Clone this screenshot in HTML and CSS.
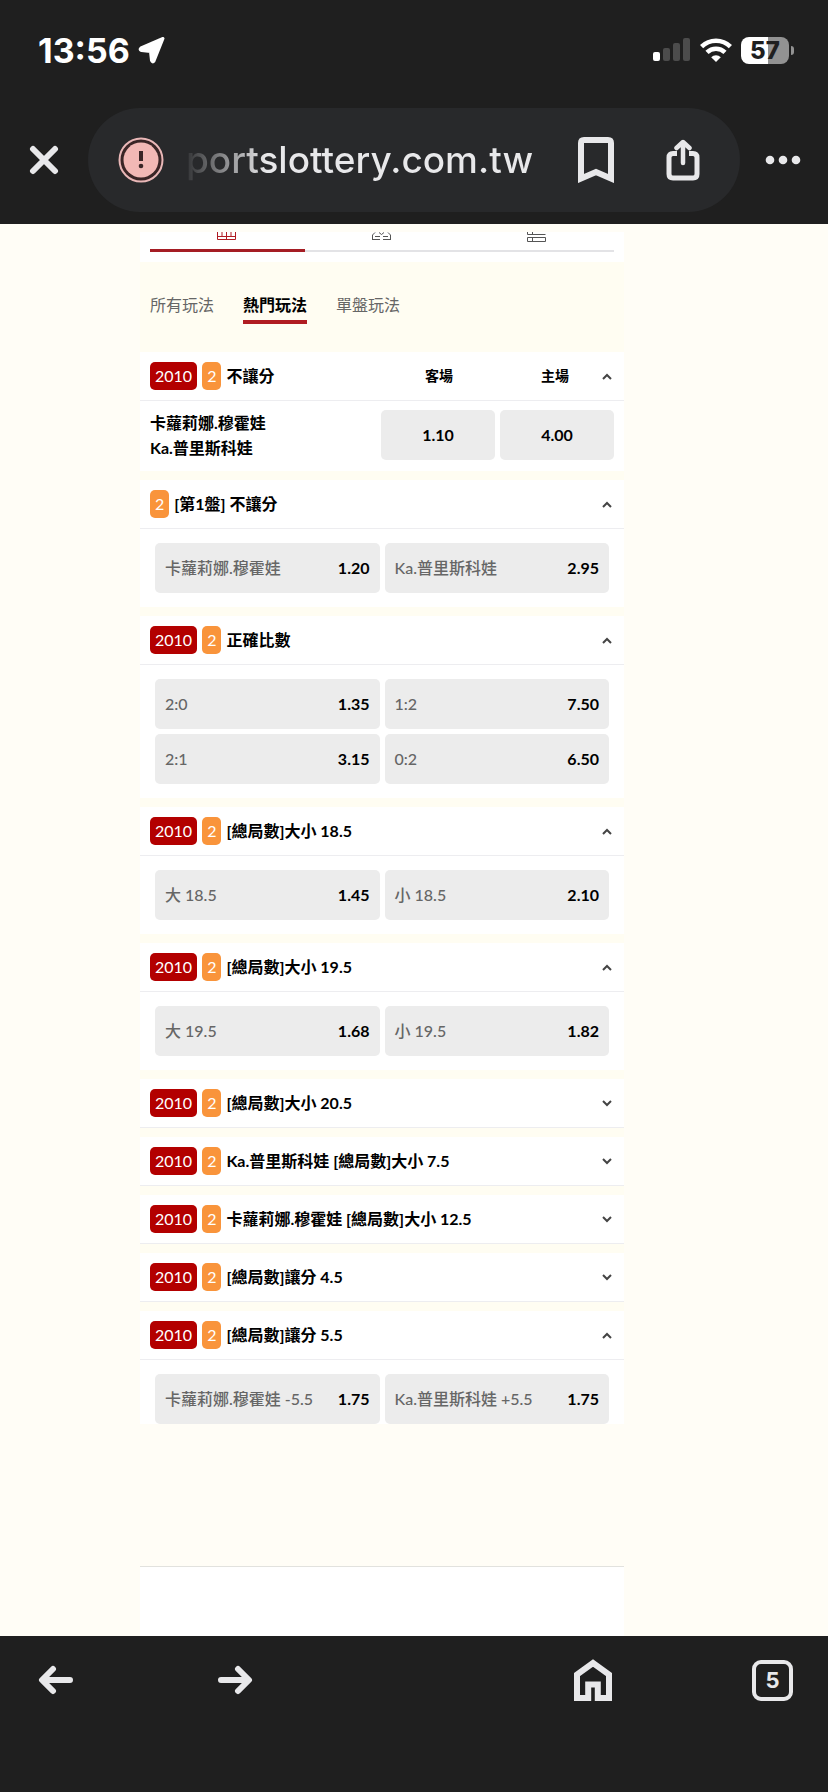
FILE: index.html
```
<!DOCTYPE html>
<html lang="zh-Hant">
<head>
  <meta charset="UTF-8" />
  <meta name="viewport" content="width=device-width, initial-scale=1.0"/>
  <title>熱門玩法</title>
  <link rel="stylesheet" href="styles.css">
</head>
<body>
  <header class="browser-top">
    <div class="status-bar">
      <span class="time">13:56</span>
      <svg class="location" width="28" height="28" viewBox="0 0 28 28"><path d="M25 2.5 L16 25 Q14.5 27 13.5 24.5 L12.5 15.5 L3.5 14.5 Q1 13.5 3 12 Z" fill="#fff" stroke="#fff" stroke-width="3" stroke-linejoin="round"/></svg>
      <div class="status-icons">
        <svg width="38" height="24" viewBox="0 0 38 24">
          <rect x="0" y="14" width="7" height="9" rx="2" fill="#fff"/>
          <rect x="10" y="10" width="7" height="13" rx="2" fill="#4c4c4c"/>
          <rect x="20" y="5" width="7" height="18" rx="2" fill="#4c4c4c"/>
          <rect x="30" y="0" width="7" height="23" rx="2" fill="#4c4c4c"/>
        </svg>
        <svg width="32" height="24" viewBox="0 0 32 24" fill="none" stroke="#fff" stroke-width="4.5">
          <path d="M1.6 8.6 A20.5 20.5 0 0 1 30.4 8.6"/>
          <path d="M7 14.3 A13 13 0 0 1 25 14.3"/>
          <path d="M16 24 L11.2 19.2 A6.8 6.8 0 0 1 20.8 19.2 Z" fill="#fff" stroke="none"/>
        </svg>
        <div class="battery"><span class="battery-body">57</span><span class="battery-cap"></span></div>
      </div>
    </div>
    <div class="address-row">
      <button class="icon-btn" aria-label="關閉">
        <svg width="30" height="30" viewBox="0 0 30 30"><path d="M4 4 L26 26 M26 4 L4 26" stroke="#e8e8ea" stroke-width="6" stroke-linecap="round"/></svg>
      </button>
      <div class="address-bar">
        <svg class="warning" width="46" height="46" viewBox="0 0 46 46">
          <circle cx="23" cy="23" r="21.5" fill="#3a2526" stroke="#e9b7b7" stroke-width="2"/>
          <circle cx="23" cy="23" r="17.5" fill="#f2b8b5"/>
          <path d="M23 14 V24" stroke="#3a2526" stroke-width="4"/>
          <circle cx="23" cy="29" r="2.3" fill="#3a2526"/>
        </svg>
        <span class="url">portslottery.com.tw</span>
        <button class="icon-btn" aria-label="書籤">
          <svg width="36" height="46" viewBox="0 0 36 46"><path d="M3 41.5 V6 Q3 3 6 3 H30 Q33 3 33 6 V41.5 L18 35 Z" fill="none" stroke="#e8e8ea" stroke-width="6"/></svg>
        </button>
        <button class="icon-btn share" aria-label="分享">
          <svg width="34" height="42" viewBox="0 0 34 42" fill="none" stroke="#e8e8ea" stroke-width="5">
            <path d="M11 14.5 H7 Q3 14.5 3 18.5 V35 Q3 39 7 39 H27 Q31 39 31 35 V18.5 Q31 14.5 27 14.5 H23"/>
            <path d="M17 24 V4 M10.5 9 L17 3 L23.5 9" stroke-width="4.5" stroke-linecap="round" stroke-linejoin="round"/>
          </svg>
        </button>
      </div>
      <button class="icon-btn" aria-label="更多">
        <svg width="36" height="10" viewBox="0 0 36 10" fill="#e8e8ea"><circle cx="5" cy="5" r="4.3"/><circle cx="18" cy="5" r="4.3"/><circle cx="31" cy="5" r="4.3"/></svg>
      </button>
    </div>
  </header>

  <main class="page">
    <div class="markets">
      <nav class="view-tabs">
        <a href="#" class="view-tab active" aria-label="盤口">
          <svg width="20" height="9" viewBox="0 0 20 9" fill="none" stroke="#b01c22"><path d="M.5 0 V7.5 H18.5 V0 M.5 4.5 H18.5 M5 0 V4.5 M9.5 0 V7.5 M14 0 V4.5"/></svg>
        </a>
        <a href="#" class="view-tab" aria-label="對戰">
          <svg width="20" height="9" viewBox="0 0 20 9" fill="none" stroke="#555"><path d="M.5 8 V3 L3 .5 M7 .5 L9.5 2.5 L12 .5 M16 .5 L18.5 3 V8 M3 4.5 H8 M11 4.5 H16 M1 7.5 H8 M11 7.5 H18"/></svg>
        </a>
        <a href="#" class="view-tab" aria-label="數據">
          <svg width="20" height="10" viewBox="0 0 20 10" fill="none" stroke="#555"><path d="M.5 0 V2.5 H18.5 M5.5 0 V2.5 M.5 5.5 H18.5 V9.5 H.5 Z M5.5 5.5 V9.5"/></svg>
        </a>
      </nav>

      <nav class="filters">
        <a href="#">所有玩法</a>
        <a href="#" class="active">熱門玩法</a>
        <a href="#">單盤玩法</a>
      </nav>

      <section class="market">
        <h2 class="market-head">
          <span class="tag red">2010</span><span class="tag orange">2</span>
          <span class="title">不讓分</span>
          <span class="side">客場</span><span class="side">主場</span>
          <button class="toggle" aria-label="收合"><svg width="10" height="7" viewBox="0 0 10 7"><path d="M1 6 L5 2 L9 6"/></svg></button>
        </h2>
        <div class="match">
          <div class="players">卡蘿莉娜.穆霍娃<br>Ka.普里斯科娃</div>
          <button class="odd single"><b>1.10</b></button>
          <button class="odd single"><b>4.00</b></button>
        </div>
      </section>

      <section class="market">
        <h2 class="market-head">
          <span class="tag orange">2</span>
          <span class="title">[第1盤] 不讓分</span>
          <button class="toggle" aria-label="收合"><svg width="10" height="7" viewBox="0 0 10 7"><path d="M1 6 L5 2 L9 6"/></svg></button>
        </h2>
        <div class="odds">
          <button class="odd">卡蘿莉娜.穆霍娃 <b>1.20</b></button>
          <button class="odd">Ka.普里斯科娃 <b>2.95</b></button>
        </div>
      </section>

      <section class="market">
        <h2 class="market-head">
          <span class="tag red">2010</span><span class="tag orange">2</span>
          <span class="title">正確比數</span>
          <button class="toggle" aria-label="收合"><svg width="10" height="7" viewBox="0 0 10 7"><path d="M1 6 L5 2 L9 6"/></svg></button>
        </h2>
        <div class="odds">
          <button class="odd">2:0 <b>1.35</b></button>
          <button class="odd">1:2 <b>7.50</b></button>
          <button class="odd">2:1 <b>3.15</b></button>
          <button class="odd">0:2 <b>6.50</b></button>
        </div>
      </section>

      <section class="market">
        <h2 class="market-head">
          <span class="tag red">2010</span><span class="tag orange">2</span>
          <span class="title">[總局數]大小 18.5</span>
          <button class="toggle" aria-label="收合"><svg width="10" height="7" viewBox="0 0 10 7"><path d="M1 6 L5 2 L9 6"/></svg></button>
        </h2>
        <div class="odds">
          <button class="odd">大 18.5 <b>1.45</b></button>
          <button class="odd">小 18.5 <b>2.10</b></button>
        </div>
      </section>

      <section class="market">
        <h2 class="market-head">
          <span class="tag red">2010</span><span class="tag orange">2</span>
          <span class="title">[總局數]大小 19.5</span>
          <button class="toggle" aria-label="收合"><svg width="10" height="7" viewBox="0 0 10 7"><path d="M1 6 L5 2 L9 6"/></svg></button>
        </h2>
        <div class="odds">
          <button class="odd">大 19.5 <b>1.68</b></button>
          <button class="odd">小 19.5 <b>1.82</b></button>
        </div>
      </section>

      <section class="market">
        <h2 class="market-head">
          <span class="tag red">2010</span><span class="tag orange">2</span>
          <span class="title">[總局數]大小 20.5</span>
          <button class="toggle" aria-label="展開"><svg width="10" height="7" viewBox="0 0 10 7"><path d="M1 1 L5 5 L9 1"/></svg></button>
        </h2>
      </section>

      <section class="market">
        <h2 class="market-head">
          <span class="tag red">2010</span><span class="tag orange">2</span>
          <span class="title">Ka.普里斯科娃 [總局數]大小 7.5</span>
          <button class="toggle" aria-label="展開"><svg width="10" height="7" viewBox="0 0 10 7"><path d="M1 1 L5 5 L9 1"/></svg></button>
        </h2>
      </section>

      <section class="market">
        <h2 class="market-head">
          <span class="tag red">2010</span><span class="tag orange">2</span>
          <span class="title">卡蘿莉娜.穆霍娃 [總局數]大小 12.5</span>
          <button class="toggle" aria-label="展開"><svg width="10" height="7" viewBox="0 0 10 7"><path d="M1 1 L5 5 L9 1"/></svg></button>
        </h2>
      </section>

      <section class="market">
        <h2 class="market-head">
          <span class="tag red">2010</span><span class="tag orange">2</span>
          <span class="title">[總局數]讓分 4.5</span>
          <button class="toggle" aria-label="展開"><svg width="10" height="7" viewBox="0 0 10 7"><path d="M1 1 L5 5 L9 1"/></svg></button>
        </h2>
      </section>

      <section class="market last">
        <h2 class="market-head">
          <span class="tag red">2010</span><span class="tag orange">2</span>
          <span class="title">[總局數]讓分 5.5</span>
          <button class="toggle" aria-label="收合"><svg width="10" height="7" viewBox="0 0 10 7"><path d="M1 6 L5 2 L9 6"/></svg></button>
        </h2>
        <div class="odds">
          <button class="odd">卡蘿莉娜.穆霍娃 -5.5 <b>1.75</b></button>
          <button class="odd">Ka.普里斯科娃 +5.5 <b>1.75</b></button>
        </div>
      </section>
    </div>

    <div class="bet-slip"></div>
  </main>

  <footer class="browser-bottom">
    <button class="icon-btn" aria-label="上一頁">
      <svg width="36" height="30" viewBox="0 0 36 30"><path d="M32 15 H5 M15 4 L4 15 L15 26"/></svg>
    </button>
    <button class="icon-btn forward" aria-label="下一頁">
      <svg width="36" height="30" viewBox="0 0 36 30"><path d="M4 15 H31 M21 4 L32 15 L21 26"/></svg>
    </button>
    <button class="icon-btn home" aria-label="首頁">
      <svg width="40" height="42" viewBox="0 0 40 42"><path d="M4 39 V15.5 L20 4 L36 15.5 V39 H24.8 V25.5 H15.2 V39 Z"/></svg>
    </button>
    <button class="tab-count" aria-label="分頁">5</button>
  </footer>
</body>
</html>
```
FILE: styles.css
```
* {
  box-sizing: border-box;
}

body {
  margin: 0;
  min-height: 100vh;
  display: flex;
  flex-direction: column;
  font-family: Lato, 'Noto Sans CJK TC', sans-serif;
  font-size: 16px;
  background: #fffdf6;
  color: #000;
}

button {
  border: none;
  padding: 0;
  background: none;
  font-family: inherit;
  cursor: pointer;
}

a {
  color: inherit;
  text-decoration: none;
}

svg {
  display: block;
}

/* browser chrome */
.browser-top {
  background: #1f1f1f;
  padding-bottom: 12px;
}

.status-bar {
  display: flex;
  align-items: center;
  height: 100px;
  padding: 0 34px 0 38px;
  color: #fff;
  font-family: Inter, sans-serif;
}

.time {
  font-size: 34px;
  font-weight: 700;
}

.location {
  margin-left: 8px;
}

.status-icons {
  display: flex;
  align-items: center;
  gap: 9px;
  margin-left: auto;
}

.battery {
  display: flex;
  align-items: center;
  gap: 2px;
}

.battery-body {
  width: 48px;
  height: 27px;
  border-radius: 8px;
  background: linear-gradient(90deg, #fff 56%, #929292 56%);
  color: #1f1f1f;
  font-size: 24px;
  font-weight: 800;
  line-height: 27px;
  text-align: center;
}

.battery-cap {
  width: 3px;
  height: 9px;
  border-radius: 0 3px 3px 0;
  background: #929292;
}

.address-row {
  display: flex;
  align-items: center;
  padding: 8px 27px 0 29px;
}

.address-bar {
  flex: 1;
  display: flex;
  align-items: center;
  height: 104px;
  margin: 0 25px 0 29px;
  padding: 0 40px 0 30px;
  border-radius: 52px;
  background: #28292b;
}

.icon-btn {
  display: block;
}

.url {
  flex: 1;
  margin-left: 22px;
  padding-bottom: 2px;
  font-family: Inter, sans-serif;
  font-size: 37px;
  font-weight: 500;
  background: linear-gradient(90deg, #333436, #e8e8ea 80px);
  -webkit-background-clip: text;
  background-clip: text;
  color: transparent;
}

.share {
  margin-left: 52px;
}

.browser-bottom {
  display: flex;
  align-items: center;
  height: 156px;
  padding: 0 35px 68px 38px;
  background: #1f1f1f;
}

.browser-bottom svg {
  fill: none;
  stroke: #e8e8ea;
  stroke-width: 6;
  stroke-linecap: round;
  stroke-linejoin: round;
}

.browser-bottom .home svg {
  stroke-linecap: butt;
  stroke-linejoin: miter;
}

.forward {
  margin-left: 143px;
}

.home {
  margin-left: auto;
}

.tab-count {
  width: 41px;
  height: 41px;
  margin-left: 139px;
  border: 4px solid #e8e8ea;
  border-radius: 9px;
  color: #e8e8ea;
  font-family: Inter, sans-serif;
  font-size: 22px;
  font-weight: 700;
}

/* page */
.page {
  flex: 1;
  display: flex;
  flex-direction: column;
  padding: 8px 204px 0 140px;
}

.markets {
  background: #fffdf2;
}

.view-tabs {
  display: flex;
  height: 30px;
  padding: 0 10px 10px;
  background: #fff;
}

.view-tab {
  flex: 1;
  display: flex;
  justify-content: center;
  border-bottom: 2px solid #e3e3e6;
}

.view-tab.active {
  border-bottom: 3px solid #a51d24;
}

.filters {
  display: flex;
  gap: 29px;
  padding: 29px 10px 28px;
  color: #666;
}

.filters a {
  height: 33px;
  line-height: 28px;
}

.filters .active {
  border-bottom: 4px solid #b01c22;
  color: #000;
  font-weight: 700;
}

.market {
  margin-bottom: 9px;
  background: #fff;
}

.market-head {
  display: flex;
  align-items: center;
  gap: 5px;
  height: 49px;
  margin: 0;
  padding: 0 12px 0 10px;
  border-bottom: 1px solid #ededf0;
  font-size: 16px;
  font-weight: 700;
}

.tag {
  height: 28px;
  padding: 0 5px;
  border-radius: 5px;
  color: #fff;
  font-weight: 400;
  line-height: 28px;
}

.red {
  background: #b30000;
}

.orange {
  background: #f9943b;
}

.title {
  flex: 1;
  padding-bottom: 2px;
}

.side {
  width: 84px;
  padding-bottom: 2px;
  font-size: 14px;
  text-align: center;
}

.side + .side {
  margin-left: 27px;
}

.toggle svg {
  fill: none;
  stroke: #444;
  stroke-width: 2;
}

.match {
  display: flex;
  gap: 5px;
  padding: 9px 10px 11px;
}

.players {
  flex: 1;
  font-weight: 700;
  line-height: 25px;
}

.odds {
  display: grid;
  grid-template-columns: 1fr 1fr;
  gap: 5px;
  padding: 14px 15px;
}

.odd {
  display: flex;
  align-items: center;
  justify-content: space-between;
  height: 50px;
  padding: 0 10px 2px;
  border-radius: 5px;
  background: #ececec;
  color: #666;
  font-size: 16px;
  font-weight: 500;
}

.odd b {
  color: #000;
  font-weight: 700;
}

.single {
  justify-content: center;
  width: 114px;
}

.last {
  margin-bottom: 0;
}

.last .odds {
  padding-bottom: 0;
}

.bet-slip {
  height: 70px;
  margin-top: auto;
  border-top: 1px solid #e2e2de;
  background: #fff;
}
```
